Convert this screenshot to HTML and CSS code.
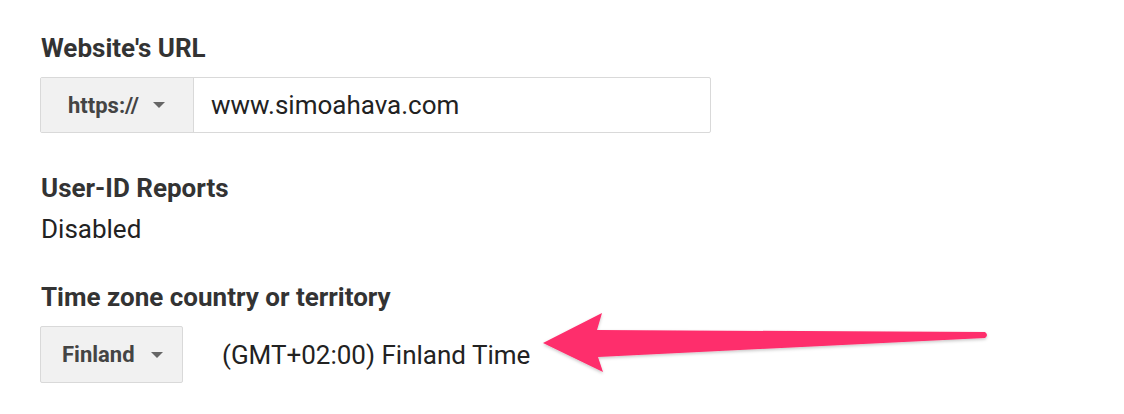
FILE: index.html
```html
<!DOCTYPE html>
<html>
<head>
<meta charset="utf-8">
<link rel="stylesheet" href="styles.css">
</head>
<body>
<div class="page">
  <section class="field field-url">
    <div class="label">Website's URL</div>
    <div class="url-group">
      <div class="select select-proto">
        <span class="select-text">https://</span>
        <span class="caret"></span>
      </div>
      <div class="url-input">www.simoahava.com</div>
    </div>
  </section>

  <section class="field field-userid">
    <div class="label">User-ID Reports</div>
    <div class="value">Disabled</div>
  </section>

  <section class="field field-tz">
    <div class="label">Time zone country or territory</div>
    <div class="tz-row">
      <div class="select select-country">
        <span class="select-text">Finland</span>
        <span class="caret"></span>
      </div>
      <div class="tz-value">(GMT+02:00) Finland Time</div>
    </div>
  </section>
</div>

<svg class="annotation" width="1124" height="414" viewBox="0 0 1124 414" aria-hidden="true">
  <defs>
    <filter id="sh" x="-5%" y="-50%" width="110%" height="200%">
      <feDropShadow dx="0" dy="1.5" stdDeviation="1.5" flood-color="#000" flood-opacity="0.22"/>
    </filter>
  </defs>
  <path filter="url(#sh)" fill="#fe2d6c"
        d="M543 343 L602 313 L597 330 L985 332 Q989 335 985 338 L598 357 L603 372 Z"/>
</svg>
</body>
</html>
```
FILE: styles.css
```css
html, body {
  margin: 0;
  padding: 0;
  background: #ffffff;
}

body {
  position: relative;
  width: 1124px;
  height: 414px;
  overflow: hidden;
  font-family: Roboto, "Liberation Sans", sans-serif;
  color: #333333;
}

.page {
  padding: 33px 0 0 41px;
  display: flex;
  flex-direction: column;
}

.label {
  font-weight: 700;
  font-size: 26px;
  line-height: 30px;
  color: #333333;
}

.value,
.url-input,
.tz-value {
  font-weight: 400;
  font-size: 26px;
  line-height: 30px;
  color: #222222;
}

.field-url .url-group {
  margin-top: 14px;
  margin-left: -1px;
  display: flex;
  width: 671px;
  height: 56px;
  box-sizing: border-box;
  border: 1px solid #d9d9d9;
  border-radius: 2px;
}

.select {
  display: flex;
  align-items: center;
  box-sizing: border-box;
  background: #f1f1f1;
  color: #444444;
  font-weight: 700;
  font-size: 22px;
}

.select-proto {
  width: 153px;
  padding-left: 27px;
  border-right: 1px solid #d9d9d9;
}

.select-proto .caret {
  margin-left: 14px;
}

.caret {
  width: 0;
  height: 0;
  border-left: 6px solid transparent;
  border-right: 6px solid transparent;
  border-top: 6px solid #666666;
}

.url-input {
  display: flex;
  align-items: center;
  padding-left: 17px;
}

.field-userid {
  margin-top: 40px;
}

.field-userid .value {
  margin-top: 11px;
}

.field-tz {
  margin-top: 38px;
}

.tz-row {
  margin-top: 14px;
  display: flex;
  align-items: center;
}

.select-country {
  margin-left: -1px;
  width: 143px;
  height: 57px;
  padding-left: 21px;
  border: 1px solid #d9d9d9;
  border-radius: 2px;
}

.select-country .caret {
  margin-left: 16px;
}

.tz-value {
  margin-left: 39px;
}

.annotation {
  position: absolute;
  left: 0;
  top: 0;
  pointer-events: none;
}
```
